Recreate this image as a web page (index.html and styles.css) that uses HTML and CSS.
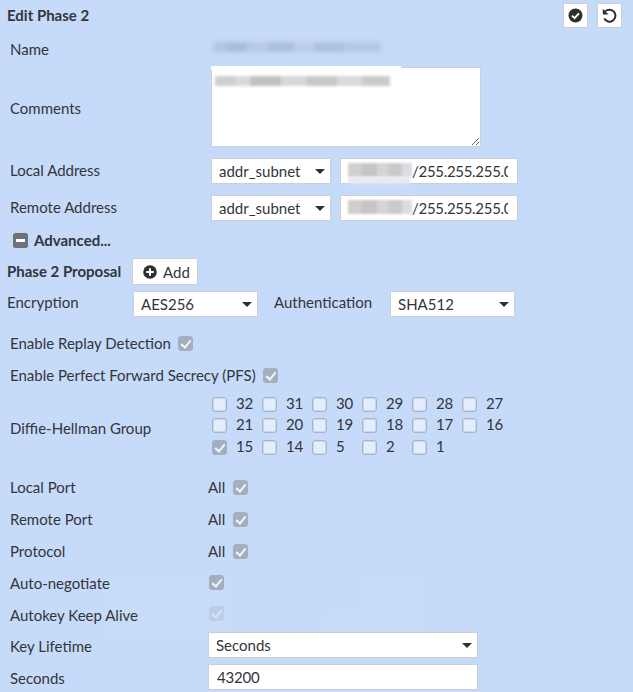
FILE: index.html
```html
<!DOCTYPE html>
<html lang="en">
<head>
<meta charset="utf-8">
<title>Edit Phase 2</title>
<link rel="stylesheet" href="styles.css">
</head>
<body>
<div class="watermark wm-a"></div>
<div class="watermark wm-b"></div>
<div class="watermark wm-c"></div>
<div class="watermark wm-d"></div>
<form class="panel">
  <header class="head">
    <h1 class="title">Edit Phase 2</h1>
    <div class="actions">
      <button type="button" class="icon-btn"><svg width="15" height="15" viewBox="0 0 15 15"><circle cx="7.5" cy="7.5" r="7" fill="#2f2f2f"/><path d="M4 7.6l2.5 2.5L11 5.4" fill="none" stroke="#fff" stroke-width="2"/></svg></button>
      <button type="button" class="icon-btn"><svg width="15" height="15" viewBox="0 0 15 15"><path d="M3.2 3.4A6 6 0 1 1 2.2 10.6" fill="none" stroke="#2f2f2f" stroke-width="2"/><path d="M.8 .8L.8 6.6L6.6 6.6Z" fill="#2f2f2f"/></svg></button>
    </div>
  </header>

  <div class="row row-name">
    <label class="label">Name</label>
    <span class="blur blur-name"></span>
  </div>

  <div class="row row-comments">
    <label class="label label-low">Comments</label>
    <div class="area-wrap">
      <span class="blur blur-comment-top"></span>
      <span class="blur blur-comment"></span>
      <textarea class="area"></textarea>
    </div>
  </div>

  <div class="row row-addr">
    <label class="label label-high">Local Address</label>
    <div class="select-wrap sel-addr"><select class="select"><option>addr_subnet</option></select></div>
    <div class="input-wrap"><span class="blur blur-ip"></span><span class="blur blur-ip-low"></span><input class="input input-ip" value="/255.255.255.0"></div>
  </div>

  <div class="row row-addr">
    <label class="label label-high">Remote Address</label>
    <div class="select-wrap sel-addr"><select class="select"><option>addr_subnet</option></select></div>
    <div class="input-wrap"><span class="blur blur-ip"></span><input class="input input-ip" value="/255.255.255.0"></div>
  </div>

  <div class="advanced">
    <svg class="minus" width="15" height="15" viewBox="0 0 15 15"><rect width="15" height="15" rx="2.5" fill="#6d7178"/><rect x="3" y="6" width="9" height="3" fill="#fff"/></svg>
    <strong>Advanced...</strong>
  </div>

  <div class="proposal">
    <strong class="proposal-title">Phase 2 Proposal</strong>
    <button type="button" class="add-btn"><svg width="14" height="14" viewBox="0 0 14 14"><circle cx="7" cy="7" r="6.8" fill="#2f2f2f"/><path d="M7 3.2v7.6M3.2 7h7.6" stroke="#fff" stroke-width="2"/></svg>Add</button>
  </div>

  <div class="enc">
    <label class="enc-label">Encryption</label>
    <div class="select-wrap sel-enc"><select class="select"><option>AES256</option></select></div>
    <label class="auth-label">Authentication</label>
    <div class="select-wrap sel-enc"><select class="select"><option>SHA512</option></select></div>
  </div>

  <div class="row row-replay">
    <label class="label-auto">Enable Replay Detection</label>
    <span class="cb on"></span>
  </div>
  <div class="row row-pfs">
    <label class="label-auto">Enable Perfect Forward Secrecy (PFS)</label>
    <span class="cb on"></span>
  </div>

  <div class="row row-dh">
    <label class="label label-dh">Diffie-Hellman Group</label>
    <div class="dh-grid">
      <div class="dh"><span class="cb"></span>32</div>
      <div class="dh"><span class="cb"></span>31</div>
      <div class="dh"><span class="cb"></span>30</div>
      <div class="dh"><span class="cb"></span>29</div>
      <div class="dh"><span class="cb"></span>28</div>
      <div class="dh"><span class="cb"></span>27</div>
      <div class="dh"><span class="cb"></span>21</div>
      <div class="dh"><span class="cb"></span>20</div>
      <div class="dh"><span class="cb"></span>19</div>
      <div class="dh"><span class="cb"></span>18</div>
      <div class="dh"><span class="cb"></span>17</div>
      <div class="dh"><span class="cb"></span>16</div>
      <div class="dh"><span class="cb on"></span>15</div>
      <div class="dh"><span class="cb"></span>14</div>
      <div class="dh"><span class="cb"></span>5</div>
      <div class="dh"><span class="cb"></span>2</div>
      <div class="dh"><span class="cb"></span>1</div>
    </div>
  </div>

  <div class="row row-port first">
    <label class="label label-port">Local Port</label><span class="all">All</span><span class="cb on"></span>
  </div>
  <div class="row row-port">
    <label class="label label-port">Remote Port</label><span class="all">All</span><span class="cb on"></span>
  </div>
  <div class="row row-port">
    <label class="label label-port">Protocol</label><span class="all">All</span><span class="cb on"></span>
  </div>
  <div class="row row-port">
    <label class="label label-port">Auto-negotiate</label><span class="cb on cb-auto"></span>
  </div>
  <div class="row row-port">
    <label class="label label-port">Autokey Keep Alive</label><span class="cb faint cb-keep"></span>
  </div>
  <div class="row row-life">
    <label class="label label-port label-low">Key Lifetime</label>
    <div class="select-wrap sel-life"><select class="select"><option>Seconds</option></select></div>
  </div>
  <div class="row row-secs">
    <label class="label label-port label-low">Seconds</label>
    <input class="input input-secs" value="43200">
  </div>
</form>
</body>
</html>
```
FILE: styles.css
```css
html, body { margin: 0; padding: 0; }
body {
  width: 633px;
  height: 692px;
  overflow: hidden;
  position: relative;
  background: #c6daf9;
  color: #33353b;
  font-family: "Lato", "Liberation Sans", sans-serif;
  font-size: 15px;
  line-height: 17px;
}
.panel { position: relative; padding: 3px 11px 0 0; }
.watermark { position: absolute; background: #c7dcf7; }
.wm-a { left: 105px; top: 577px; width: 127px; height: 63px; }
.wm-b { left: 361px; top: 577px; width: 64px; height: 55px; }
.wm-c { left: 325px; top: 613px; width: 36px; height: 19px; }
.wm-d { left: 389px; top: 613px; width: 36px; height: 19px; }

.head { display: flex; justify-content: space-between; align-items: center; height: 25px; }
.title { margin: 0 0 0 7px; font-size: 15px; font-weight: 700; }
.actions { display: flex; gap: 9px; }
.icon-btn {
  box-sizing: border-box; width: 25px; height: 25px; padding: 0;
  display: flex; align-items: center; justify-content: center;
  background: #fff; border: 1px solid #ccd0d6;
}

.row { display: flex; align-items: center; }
.label { box-sizing: border-box; width: 211px; padding-left: 10px; flex: none; }
.label-low { padding-top: 2px; }
.label-high { padding-bottom: 2px; }
.label-auto { padding-left: 10px; margin-right: 7px; }
.label-port { width: 208px; }

.blur { display: block; position: absolute; pointer-events: none; }
.row-name { height: 17px; margin-top: 13px; position: relative; }
.blur-name {
  left: 213px; top: 1px; width: 168px; height: 10px; filter: blur(2px); opacity: .75;
  background: linear-gradient(90deg, #aebfd9 0 8%, #9fb2d0 8% 20%, #b3c4df 20% 33%, #a3b6d3 33% 48%, #b7c8e2 48% 60%, #a5b8d5 60% 78%, #afc1dc 78% 100%);
}

.row-comments { margin-top: 9px; }
.area-wrap { position: relative; width: 270px; height: 80px; }
.area {
  box-sizing: border-box; display: block; width: 270px; height: 80px; margin: 0;
  background: #fff; border: 1px solid #ccd0d6; outline: 0; resize: both; border-radius: 0;
}
.blur-comment-top { z-index: 1; left: 0; top: 0; width: 190px; height: 4px; background: #fff; margin-top: -1px; }
.blur-comment {
  z-index: 1; left: 4px; top: 9px; width: 175px; height: 10px; filter: blur(1.5px); opacity: .85;
  background: linear-gradient(90deg, #c6c6c4 0 12%, #d2d4d3 12% 20%, #b9b6b3 20% 38%, #cfd2d2 38% 52%, #c0bdbb 52% 70%, #d3d5d5 70% 84%, #c3c1c0 84% 100%);
}

.row-addr { margin-top: 11px; }
.select-wrap { position: relative; box-sizing: border-box; height: 26px; flex: none; }
.select-wrap::after {
  content: ""; position: absolute; right: 6px; top: 11px;
  border-left: 5px solid transparent; border-right: 5px solid transparent; border-top: 5px solid #2f2f2f;
  pointer-events: none;
}
.select {
  box-sizing: border-box; width: 100%; height: 26px; margin: 0; padding: 0 0 0 7px;
  appearance: none; -webkit-appearance: none; background: #fff; color: #33353b;
  border: 1px solid #ccd0d6; border-radius: 0; outline: 0;
  font: 15px/24px "Lato", "Liberation Sans", sans-serif;
}
.sel-addr { width: 120px; margin-right: 9px; }
.sel-enc { width: 125px; }
.sel-life { width: 270px; }
.input-wrap { position: relative; width: 178px; height: 26px; flex: none; }
.input {
  box-sizing: border-box; height: 26px; margin: 0; background: #fff; color: #33353b;
  border: 1px solid #ccd0d6; border-radius: 0; outline: 0;
  font: 15px/24px "Lato", "Liberation Sans", sans-serif;
}
.input-ip { width: 178px; padding: 0 9px 0 71px; letter-spacing: -.3px; }
.blur-ip {
  z-index: 1; left: 8px; top: 5px; width: 64px; height: 14px; filter: blur(1px);
  background: linear-gradient(90deg, #d0cfce 0 22%, #c8c6c5 22% 45%, #d6d5d5 45% 62%, #c9cacb 62% 84%, #d9dde2 84% 100%);
}
.blur-ip-low { z-index: 1; left: 8px; top: 19px; width: 62px; height: 7px; background: #e6ebf1; filter: blur(.8px); }

.advanced { display: flex; align-items: center; gap: 6px; margin-top: 11px; padding-left: 13px; height: 17px; }
.proposal { display: flex; align-items: center; margin-top: 9px; padding-left: 7px; height: 27px; }
.proposal-title { width: 125px; flex: none; }
.add-btn {
  box-sizing: border-box; width: 66px; height: 27px; padding: 0 0 0 10px;
  display: flex; align-items: center; gap: 6px; background: #fff; color: #33353b;
  border: 1px solid #ccd0d6; font: 15px "Lato", "Liberation Sans", sans-serif;
}
.enc { display: flex; align-items: center; margin-top: 6px; padding-left: 7px; height: 26px; }
.enc-label { width: 126px; flex: none; margin-top: -3px; }
.auth-label { width: 116px; flex: none; margin: -3px 0 0 16px; }

.cb {
  box-sizing: border-box; display: block; position: relative; width: 15px; height: 15px; flex: none;
  background: #e2edfd; border: 1px solid #a9b3c5; border-radius: 3px;
  box-shadow: inset 0 0 0 1px #c9d7ec;
}
.cb.on { background: #a3aebf; border-color: #a3aebf; box-shadow: none; }
.cb.faint { background: #bccde8; border-color: #bccde8; box-shadow: none; }
.cb.on::after, .cb.faint::after {
  content: ""; position: absolute; left: 4px; top: 1px; width: 4px; height: 8px;
  border: solid #f2f5fa; border-width: 0 2px 2px 0; transform: rotate(40deg);
}
.cb.faint::after { border-color: #d7e3f5; }

.row-replay { margin-top: 18px; height: 17px; }
.row-pfs { margin-top: 15px; height: 17px; }

.row-dh { margin-top: 9px; align-items: center; }
.label-dh { width: 212px; padding-top: 7px; }
.dh-grid { display: grid; grid-template-columns: repeat(6, 50px); grid-template-rows: 21px 21px 22px; }
.dh { display: flex; align-items: center; gap: 9px; letter-spacing: -.2px; }
.dh .cb { margin-top: 2px; }

.row-port { height: 17px; margin-top: 15px; }
.row-port.first { margin-top: 22px; }
.all { width: 25px; flex: none; }
.cb-auto { margin: -2px 0 0 1px; }
.cb-keep { margin: -4px 0 0 1px; }
.row-life { margin-top: 8px; height: 26px; }
.row-secs { margin-top: 6px; height: 26px; }
.input-secs { width: 270px; padding: 0 8px; letter-spacing: -.2px; }
```
